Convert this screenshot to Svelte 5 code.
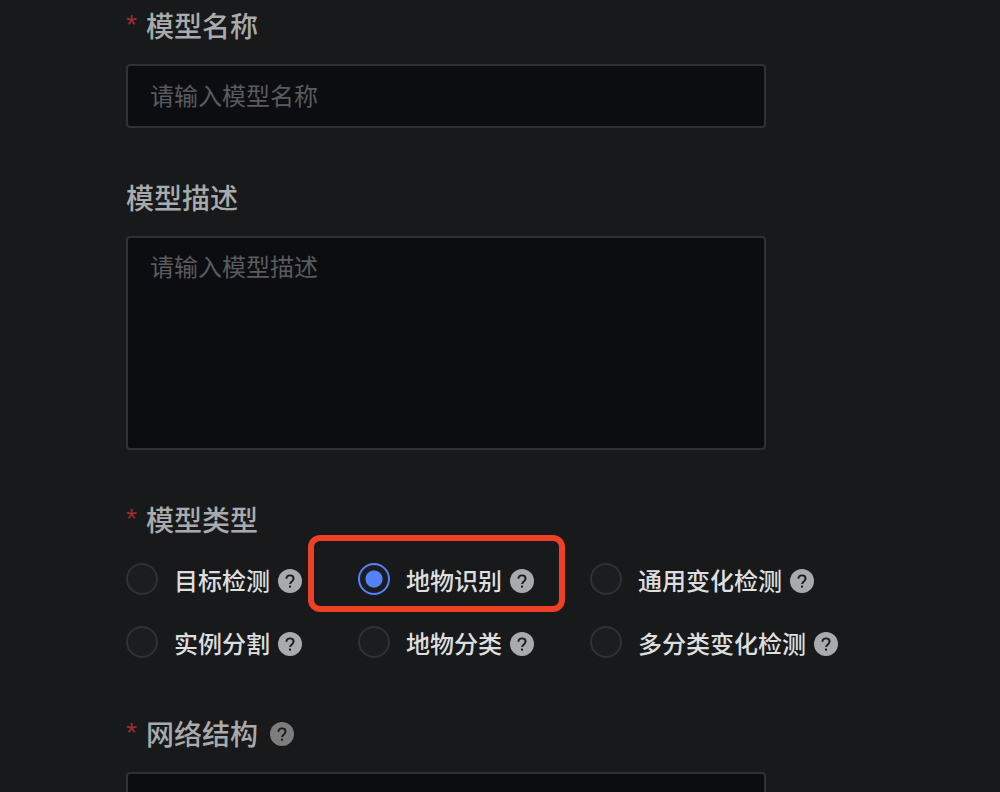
<script lang="ts">
  interface ModelType {
    id: string;
    label: string;
    marked?: boolean;
  }

  const modelTypes: ModelType[] = [
    { id: 'detect', label: '目标检测' },
    { id: 'landcover', label: '地物识别', marked: true },
    { id: 'change', label: '通用变化检测' },
    { id: 'instance', label: '实例分割' },
    { id: 'classify', label: '地物分类' },
    { id: 'multichange', label: '多分类变化检测' },
  ];

  let name = $state('');
  let description = $state('');
  let modelType = $state('landcover');
  let network = $state('');
</script>

{#snippet helpIcon()}
  <svg class="help" viewBox="0 0 24 24" aria-hidden="true">
    <circle cx="12" cy="12" r="12" fill="currentColor" />
    <path
      d="M8.4 9.8C8.4 7.6 10 6.4 12 6.4s3.6 1.2 3.6 3.1c0 1.4-.8 2.1-1.8 2.9-1.1.8-1.7 1.3-1.7 2.7"
      fill="none"
      stroke="#17191b"
      stroke-width="1.9"
    />
    <rect x="11" y="16.6" width="2" height="2" fill="#17191b" />
  </svg>
{/snippet}

<form class="form">
  <div class="field">
    <label class="title" for="name"><span class="required">*</span>模型名称</label>
    <input id="name" class="control" type="text" placeholder="请输入模型名称" bind:value={name} />
  </div>

  <div class="field">
    <label class="title" for="description">模型描述</label>
    <textarea
      id="description"
      class="control area"
      placeholder="请输入模型描述"
      bind:value={description}
    ></textarea>
  </div>

  <div class="field" role="radiogroup" aria-labelledby="type-title">
    <div class="title" id="type-title"><span class="required">*</span>模型类型</div>
    <div class="options">
      {#each modelTypes as type (type.id)}
        <label class="option" class:marked={type.marked}>
          <input type="radio" name="type" value={type.id} bind:group={modelType} />
          <span>{type.label}</span>
          {@render helpIcon()}
        </label>
      {/each}
    </div>
  </div>

  <div class="field">
    <label class="title dim-help" for="network">
      <span class="required">*</span>网络结构{@render helpIcon()}
    </label>
    <select id="network" class="control" bind:value={network}>
      <option value=""></option>
    </select>
  </div>
</form>

<style>
  :global(body) {
    background: #17191a;
  }
  .form {
    box-sizing: border-box;
    height: 100vh;
    overflow: hidden;
    padding: 6px 126px 0;
    display: flex;
    flex-direction: column;
    gap: 50px;
    font-family: "Noto Sans CJK SC", sans-serif;
    color: #dedede;
  }
  .field {
    display: flex;
    flex-direction: column;
    flex-shrink: 0;
    gap: 20px;
  }
  .title {
    display: flex;
    align-items: center;
    font-size: 28px;
    font-weight: 500;
    line-height: 38px;
    color: #a9aaab;
  }
  .required {
    width: 20px;
    font-family: "Liberation Sans", sans-serif;
    font-weight: 400;
    color: #a02c2b;
  }
  .control {
    box-sizing: border-box;
    width: 100%;
    max-width: 640px;
    height: 64px;
    margin: 0;
    padding: 0 22px 4px;
    border: 2px solid #303135;
    border-radius: 4px;
    outline: none;
    background: #0c0d11;
    color: #dedede;
    font-family: inherit;
    font-size: 24px;
    line-height: 36px;
    appearance: none;
  }
  .control::placeholder {
    color: #5a5b5e;
    opacity: 1;
  }
  .control:focus {
    border-color: #5482f8;
  }
  .area {
    display: block;
    height: 214px;
    padding: 10px 22px;
    resize: none;
  }
  .options {
    display: grid;
    grid-template-columns: 232px 232px auto;
    justify-content: start;
    row-gap: 29px;
    padding: 5px 0 4px;
  }
  .option {
    position: relative;
    display: flex;
    justify-self: start;
    font-size: 24px;
    font-weight: 500;
    line-height: 34px;
    white-space: nowrap;
    cursor: pointer;
  }
  .option input {
    box-sizing: border-box;
    width: 32px;
    height: 32px;
    margin: 0 16px 0 0;
    border: 2px solid #303135;
    border-radius: 50%;
    background: #1c1d21;
    appearance: none;
    cursor: pointer;
  }
  .option input:checked {
    border-color: #5482f8;
    background: radial-gradient(circle, #5482f8 8px, #1c1d21 9px);
  }
  .marked::after {
    content: '';
    position: absolute;
    inset: -28px -31px -15px -50px;
    border: 6px solid #ec4126;
    border-radius: 12px;
    pointer-events: none;
  }
  .help {
    width: 24px;
    height: 24px;
    margin: 2px 0 0 8px;
    align-self: center;
    color: #a9aaae;
  }
  .dim-help .help {
    margin-left: 12px;
    color: #7d7d7d;
  }
</style>
